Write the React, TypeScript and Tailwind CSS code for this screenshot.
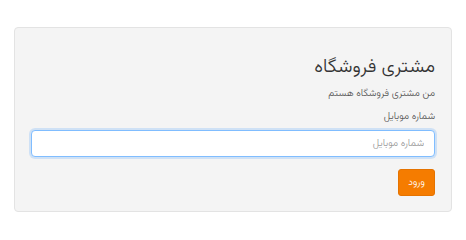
export default function App() {
  return (
    <div className="w-[466px] h-[235px] bg-white pt-[27px] px-[14px]" style={{ fontFamily: '"Vazirmatn", "Noto Sans Arabic", "DejaVu Sans", sans-serif' }}>
      <div dir="rtl" className="h-[185px] rounded-[4px] border border-[#e3e3e3] bg-[#f4f4f4] px-[16px] pt-[24px]">
        <h2 className="text-[19px] font-light leading-[32px] text-[#333]">مشتری فروشگاه</h2>
        <p className="mt-[1px] text-[10px] font-light leading-[18px] text-[#555]">من مشتری فروشگاه هستم</p>
        <label className="mt-[5px] block text-[10px] font-light leading-[18px] text-[#555]">شماره موبایل</label>
        <input
          type="text"
          placeholder="شماره موبایل"
          className="mt-[4px] block h-[27px] w-full rounded-[4px] border border-[#80bdff] bg-white px-[10px] text-[10px] font-light text-[#555] placeholder:text-[#999] shadow-[0_0_0_2px_rgba(0,123,255,0.15)] outline-none"
        />
        <button className="mt-[12px] h-[27px] w-[37px] rounded-[3px] border border-[#e57300] bg-[#f57c00] text-[10px] font-light text-white">ورود</button>
      </div>
    </div>
  );
}
